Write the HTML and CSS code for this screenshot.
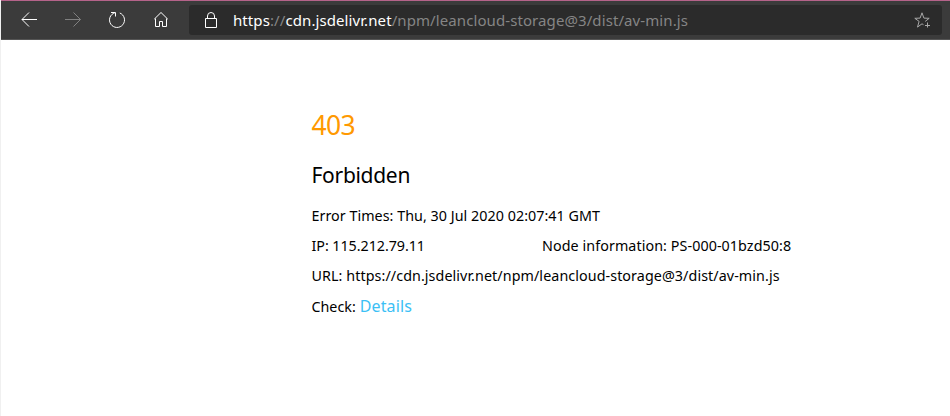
FILE: index.html
```html
<!DOCTYPE html>
<html lang="en">
<head>
<meta charset="utf-8">
<title>403 Forbidden</title>
<link rel="stylesheet" href="styles.css">
</head>
<body>
<header class="toolbar">
  <nav class="nav">
    <svg class="icon" viewBox="0 0 20 20"><path d="M18 9.500H3M10 2.500l-7 7 7 7"/></svg>
    <svg class="icon disabled" viewBox="0 0 20 20"><path d="M2 9.500h15.500M10.500 2.500l7 7-7 7"/></svg>
    <svg class="icon" viewBox="0 0 20 20"><path d="M12.800 3A7.500 7.500 0 1 1 7.800 2.800M4 2.500H8.500V6.500"/></svg>
    <svg class="icon" viewBox="0 0 20 20"><path d="M3.200 9.200L10 2.500l6.800 6.700M4.500 8.500v8h4v-5h3v5h4v-8"/></svg>
  </nav>
  <div class="address">
    <svg class="lock" viewBox="0 0 16 20"><path d="M2.500 8.500h11v9h-11zM4.500 8.500V6a3.500 3.500 0 0 1 7 0v2.500"/></svg>
    <span class="url"><b>https</b>://<b>cdn.jsdelivr.net</b>/npm/leancloud-storage@3/dist/av-min.js</span>
    <svg class="star" viewBox="0 0 20 20"><path d="M11.500 14.700L10 13.800l-4.500 3.300 1.600-5.700L2.800 8.300l5.300-.2L10 2.800l1.900 5.300 5.300.2-4 3.100M15.500 12.500v5M13 15.500h5"/></svg>
  </div>
</header>
<main class="page">
  <h1 class="code"><span>403</span></h1>
  <h2 class="reason"><span>Forbidden</span></h2>
  <p class="row time"><span>Error Times: Thu, 30 Jul 2020 02:07:41 GMT</span></p>
  <p class="row pair"><span class="ip">IP: 115.212.79.11</span><span class="node">Node information: PS-000-01bzd50:8</span></p>
  <p class="row link"><span>URL: https://cdn.jsdelivr.net/npm/leancloud-storage@3/dist/av-min.js</span></p>
  <p class="row check"><span>Check:</span><a class="details">Details</a></p>
</main>
</body>
</html>
```
FILE: styles.css
```css
* { box-sizing: border-box; }
body {
  margin: 0;
  height: 416px;
  overflow: hidden;
  background: #fff;
  border-left: 1px solid #f0f0f0;
  color: #000;
  font-family: "Noto Sans", "Open Sans", sans-serif;
}
.toolbar {
  display: flex;
  height: 40px;
  padding: 4px 8px 4px 18px;
  background: #3b3b3b;
  border-top: 1px solid #b5638a;
  border-bottom: 1px solid #555;
}
.nav { display: flex; align-items: center; gap: 24px; width: 170px; }
svg { fill: none; stroke: #fff; stroke-width: 1; flex: none; }
.icon { width: 20px; height: 20px; }
.disabled { stroke: #808080; }
.address {
  display: flex;
  align-items: center;
  flex: 1;
  height: 30px;
  padding: 0 10px 0 14px;
  background: #2b2b2b;
  border-radius: 3px;
}
.lock { width: 16px; height: 20px; }
.url {
  margin-left: 14px;
  color: #858585;
  font-size: 15px;
  letter-spacing: 0.09px;
  line-height: 28px;
  white-space: nowrap;
}
.url b { color: #fff; font-weight: 400; }
.star { width: 20px; height: 20px; margin-left: auto; stroke: #a8a8a8; }
.page { padding: 65px 0 0 310.5px; white-space: nowrap; }
h1, h2, p { margin: 0; font-weight: 400; }
.code { height: 40px; color: #ff9900; font-size: 26.5px; letter-spacing: -0.6px; line-height: 40px; }
.reason { height: 40px; margin-top: 10px; font-size: 21px; letter-spacing: -0.3px; line-height: 40px; }
.row { display: flex; height: 30px; font-size: 14.3px; letter-spacing: 0.08px; line-height: 30px; }
.time { margin-top: 6px; letter-spacing: 0.04px; }
.ip { width: 230.5px; letter-spacing: -0.05px; }
.check { height: 32px; line-height: 32px; letter-spacing: 0; }
.details { margin-left: 4px; color: #3bc0f5; font-size: 16px; letter-spacing: 0.12px; line-height: 30px; }
```
